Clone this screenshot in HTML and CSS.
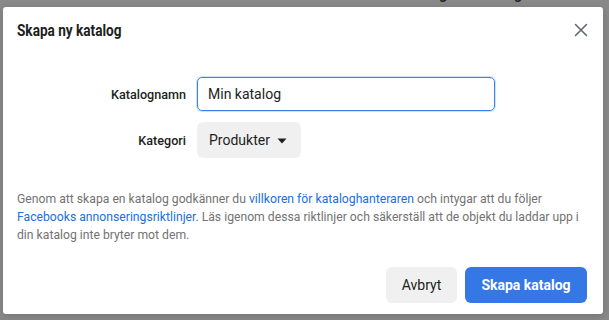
FILE: index.html
```html
<!DOCTYPE html>
<html lang="sv">
<head>
<meta charset="utf-8">
<title>Skapa ny katalog</title>
<link rel="stylesheet" href="styles.css">
</head>
<body>
<div class="backdrop-text"><span class="g1">g</span><span class="g2">g</span></div>
<div class="dialog">
  <div class="header">
    <h1 class="title">Skapa ny katalog</h1>
    <button class="close" aria-label="Stäng">
      <svg width="14" height="14" viewBox="0 0 14 14"><path d="M1.5 1.5 L12.5 12.5 M12.5 1.5 L1.5 12.5" stroke="#606770" stroke-width="1.6" stroke-linecap="round" fill="none"/></svg>
    </button>
  </div>
  <div class="form">
    <label class="label">Katalognamn</label>
    <div class="input">Min katalog</div>
    <label class="label">Kategori</label>
    <div><button class="select">Produkter <svg class="caret" width="10" height="6" viewBox="0 0 10 6"><path d="M0.5 0.5 H9.5 L5 5.5 Z" fill="#1c1e21"/></svg></button></div>
  </div>
  <p class="note">Genom att skapa en katalog godkänner du <a href="#">villkoren för kataloghanteraren</a> och intygar att du följer <a href="#">Facebooks annonseringsriktlinjer.</a> Läs igenom dessa riktlinjer och säkerställ att de objekt du laddar upp i din katalog inte bryter mot dem.</p>
  <div class="footer">
    <button class="btn btn-secondary">Avbryt</button>
    <button class="btn btn-primary">Skapa katalog</button>
  </div>
</div>
</body>
</html>
```
FILE: styles.css
```css
* { box-sizing: border-box; }
html, body { margin: 0; padding: 0; }
body {
  background: #898989;
  font-family: Roboto, "Liberation Sans", Arial, sans-serif;
  width: 609px;
  height: 320px;
  overflow: hidden;
  position: relative;
}
.backdrop-text {
  position: absolute;
  top: -14px;
  left: 0;
  font-size: 14px;
  color: #1c1e21;
  font-weight: bold;
}
.backdrop-text .g1 { position: absolute; left: 439px; }
.backdrop-text .g2 { position: absolute; left: 514px; }
.dialog {
  position: relative;
  margin: 7px 0 0 3px;
  width: 600px;
  height: 307px;
  background: #fff;
  border-radius: 3px;
  display: flex;
  flex-direction: column;
  box-shadow: 0 2px 8px rgba(0,0,0,0.15);
}
.header {
  height: 44px;
  display: flex;
  align-items: center;
  justify-content: space-between;
  padding: 1px 13px 0 14px;
}
.title {
  margin: 0;
  font-size: 17px;
  font-weight: bold;
  color: #1c1e21;
  transform: scaleX(0.8);
  transform-origin: left center;
  white-space: nowrap;
}
.close {
  border: 0;
  background: none;
  padding: 0;
  width: 18px;
  height: 18px;
  display: flex;
  align-items: center;
  justify-content: center;
}
.form {
  margin-top: 26px;
  display: grid;
  grid-template-columns: 183px 298px;
  column-gap: 11px;
  row-gap: 11px;
  align-items: center;
}
.label {
  text-align: right;
  font-size: 12.6px;
  font-weight: 500;
  color: #1c1e21;
}
.input {
  height: 34px;
  border: 1px solid #3b82f0;
  border-radius: 5px;
  box-shadow: 0 0 0 1px rgba(59,130,240,0.25);
  padding: 0 10px;
  display: flex;
  align-items: center;
  font-size: 14px;
  color: #1c1e21;
}
.select {
  height: 36px;
  border: 0;
  border-radius: 6px;
  background: #f0f0f0;
  padding: 0 14px 0 12px;
  font-family: inherit;
  font-size: 14px;
  color: #1c1e21;
  display: inline-flex;
  align-items: center;
  gap: 7px;
}
.caret { margin-top: 1px; }
.note {
  margin: 32px 20px 0 14px;
  font-size: 12.2px;
  line-height: 18px;
  color: #737373;
}
.note a {
  color: #216fdb;
  text-decoration: none;
}
.footer {
  margin-top: auto;
  padding: 0 16px 11px 0;
  display: flex;
  justify-content: flex-end;
  gap: 8px;
}
.btn {
  height: 36px;
  border: 0;
  border-radius: 6px;
  font-family: inherit;
  font-size: 14px;
}
.btn-secondary {
  width: 71px;
  background: #f0f0f0;
  color: #1c1e21;
}
.btn-primary {
  width: 122px;
  background: #3578e5;
  color: #fff;
  font-weight: bold;
}
```
